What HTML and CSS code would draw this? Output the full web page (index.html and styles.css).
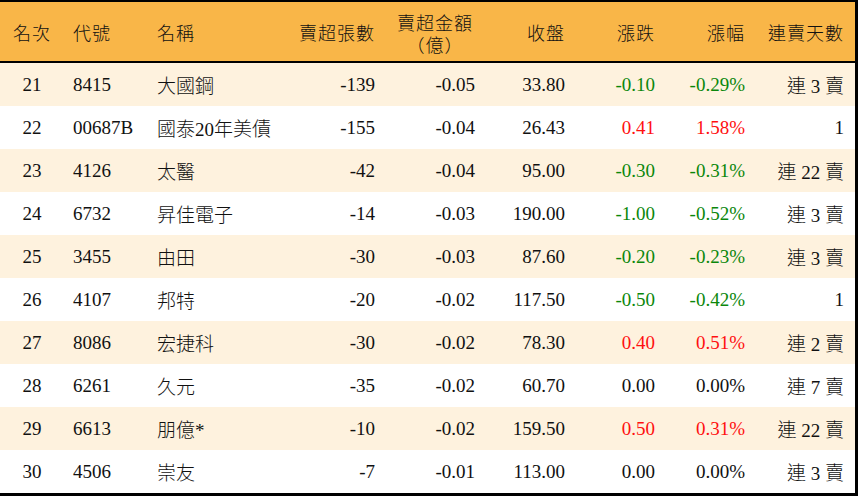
FILE: index.html
```html
<!DOCTYPE html>
<html lang="zh-Hant">
<head>
<meta charset="utf-8">
<link rel="stylesheet" href="styles.css">
</head>
<body>
<div class="frame">
<table class="rank">
  <colgroup>
    <col class="c1"><col class="c2"><col class="c3"><col class="c4"><col class="c5"><col class="c6"><col class="c7"><col class="c8"><col class="c9">
  </colgroup>
  <thead>
    <tr>
      <th class="ctr">名次</th>
      <th class="lft">代號</th>
      <th class="lft">名稱</th>
      <th class="rgt">賣超張數</th>
      <th class="ctr two">賣超金額<br>（億）</th>
      <th class="rgt">收盤</th>
      <th class="rgt">漲跌</th>
      <th class="rgt">漲幅</th>
      <th class="rgt last">連賣天數</th>
    </tr>
  </thead>
  <tbody>
    <tr class="odd"><td class="ctr">21</td><td class="lft">8415</td><td class="lft">大國鋼</td><td class="rgt">-139</td><td class="rgt">-0.05</td><td class="rgt">33.80</td><td class="rgt dn">-0.10</td><td class="rgt dn">-0.29%</td><td class="rgt last">連 3 賣</td></tr>
    <tr><td class="ctr">22</td><td class="lft">00687B</td><td class="lft">國泰20年美債</td><td class="rgt">-155</td><td class="rgt">-0.04</td><td class="rgt">26.43</td><td class="rgt up">0.41</td><td class="rgt up">1.58%</td><td class="rgt last">1</td></tr>
    <tr class="odd"><td class="ctr">23</td><td class="lft">4126</td><td class="lft">太醫</td><td class="rgt">-42</td><td class="rgt">-0.04</td><td class="rgt">95.00</td><td class="rgt dn">-0.30</td><td class="rgt dn">-0.31%</td><td class="rgt last">連 22 賣</td></tr>
    <tr><td class="ctr">24</td><td class="lft">6732</td><td class="lft">昇佳電子</td><td class="rgt">-14</td><td class="rgt">-0.03</td><td class="rgt">190.00</td><td class="rgt dn">-1.00</td><td class="rgt dn">-0.52%</td><td class="rgt last">連 3 賣</td></tr>
    <tr class="odd"><td class="ctr">25</td><td class="lft">3455</td><td class="lft">由田</td><td class="rgt">-30</td><td class="rgt">-0.03</td><td class="rgt">87.60</td><td class="rgt dn">-0.20</td><td class="rgt dn">-0.23%</td><td class="rgt last">連 3 賣</td></tr>
    <tr><td class="ctr">26</td><td class="lft">4107</td><td class="lft">邦特</td><td class="rgt">-20</td><td class="rgt">-0.02</td><td class="rgt">117.50</td><td class="rgt dn">-0.50</td><td class="rgt dn">-0.42%</td><td class="rgt last">1</td></tr>
    <tr class="odd"><td class="ctr">27</td><td class="lft">8086</td><td class="lft">宏捷科</td><td class="rgt">-30</td><td class="rgt">-0.02</td><td class="rgt">78.30</td><td class="rgt up">0.40</td><td class="rgt up">0.51%</td><td class="rgt last">連 2 賣</td></tr>
    <tr><td class="ctr">28</td><td class="lft">6261</td><td class="lft">久元</td><td class="rgt">-35</td><td class="rgt">-0.02</td><td class="rgt">60.70</td><td class="rgt">0.00</td><td class="rgt">0.00%</td><td class="rgt last">連 7 賣</td></tr>
    <tr class="odd"><td class="ctr">29</td><td class="lft">6613</td><td class="lft">朋億*</td><td class="rgt">-10</td><td class="rgt">-0.02</td><td class="rgt">159.50</td><td class="rgt up">0.50</td><td class="rgt up">0.31%</td><td class="rgt last">連 22 賣</td></tr>
    <tr><td class="ctr">30</td><td class="lft">4506</td><td class="lft">崇友</td><td class="rgt">-7</td><td class="rgt">-0.01</td><td class="rgt">113.00</td><td class="rgt">0.00</td><td class="rgt">0.00%</td><td class="rgt last">連 3 賣</td></tr>
  </tbody>
</table>
</div>
</body>
</html>
```
FILE: styles.css
```css
html, body {
  margin: 0;
  padding: 0;
  background: #ffffff;
}
.frame {
  width: 858px;
  height: 496px;
  box-sizing: border-box;
  border-top: 2px solid #000;
  border-right: 3px solid #000;
  border-bottom: 3px solid #000;
  overflow: hidden;
}
.rank {
  width: 855px;
  border-collapse: collapse;
  table-layout: fixed;
  font-family: "Liberation Serif", "Noto Sans CJK TC", serif;
  font-size: 19px;
  font-weight: 300;
  color: #111;
}
.c1 { width: 64px; }
.c2 { width: 84px; }
.c3 { width: 132px; }
.c4 { width: 105px; }
.c5 { width: 100px; }
.c6 { width: 90px; }
.c7 { width: 90px; }
.c8 { width: 90px; }
.c9 { width: 100px; }
.rank thead tr {
  background: #f9b648;
  border-bottom: 2px solid #000;
}
.rank th {
  height: 59px;
  padding: 0;
  font-weight: 300;
  font-family: "Noto Sans CJK TC", serif;
  font-size: 18px;
  letter-spacing: 1px;
  line-height: 22px;
  vertical-align: middle;
}
.rank th.two {
  height: 57px;
  padding-top: 2px;
}
.rank td {
  height: 43px;
  padding: 0;
  white-space: nowrap;
  vertical-align: middle;
}
.rank tbody tr.odd {
  background: #fef2de;
}
.ctr { text-align: center; }
.lft { text-align: left; padding-left: 9px !important; }
.rgt { text-align: right; padding-right: 10px !important; }
.last { padding-right: 11px !important; }
.dn { color: #0b870b; }
.up { color: #ff1010; }
```
